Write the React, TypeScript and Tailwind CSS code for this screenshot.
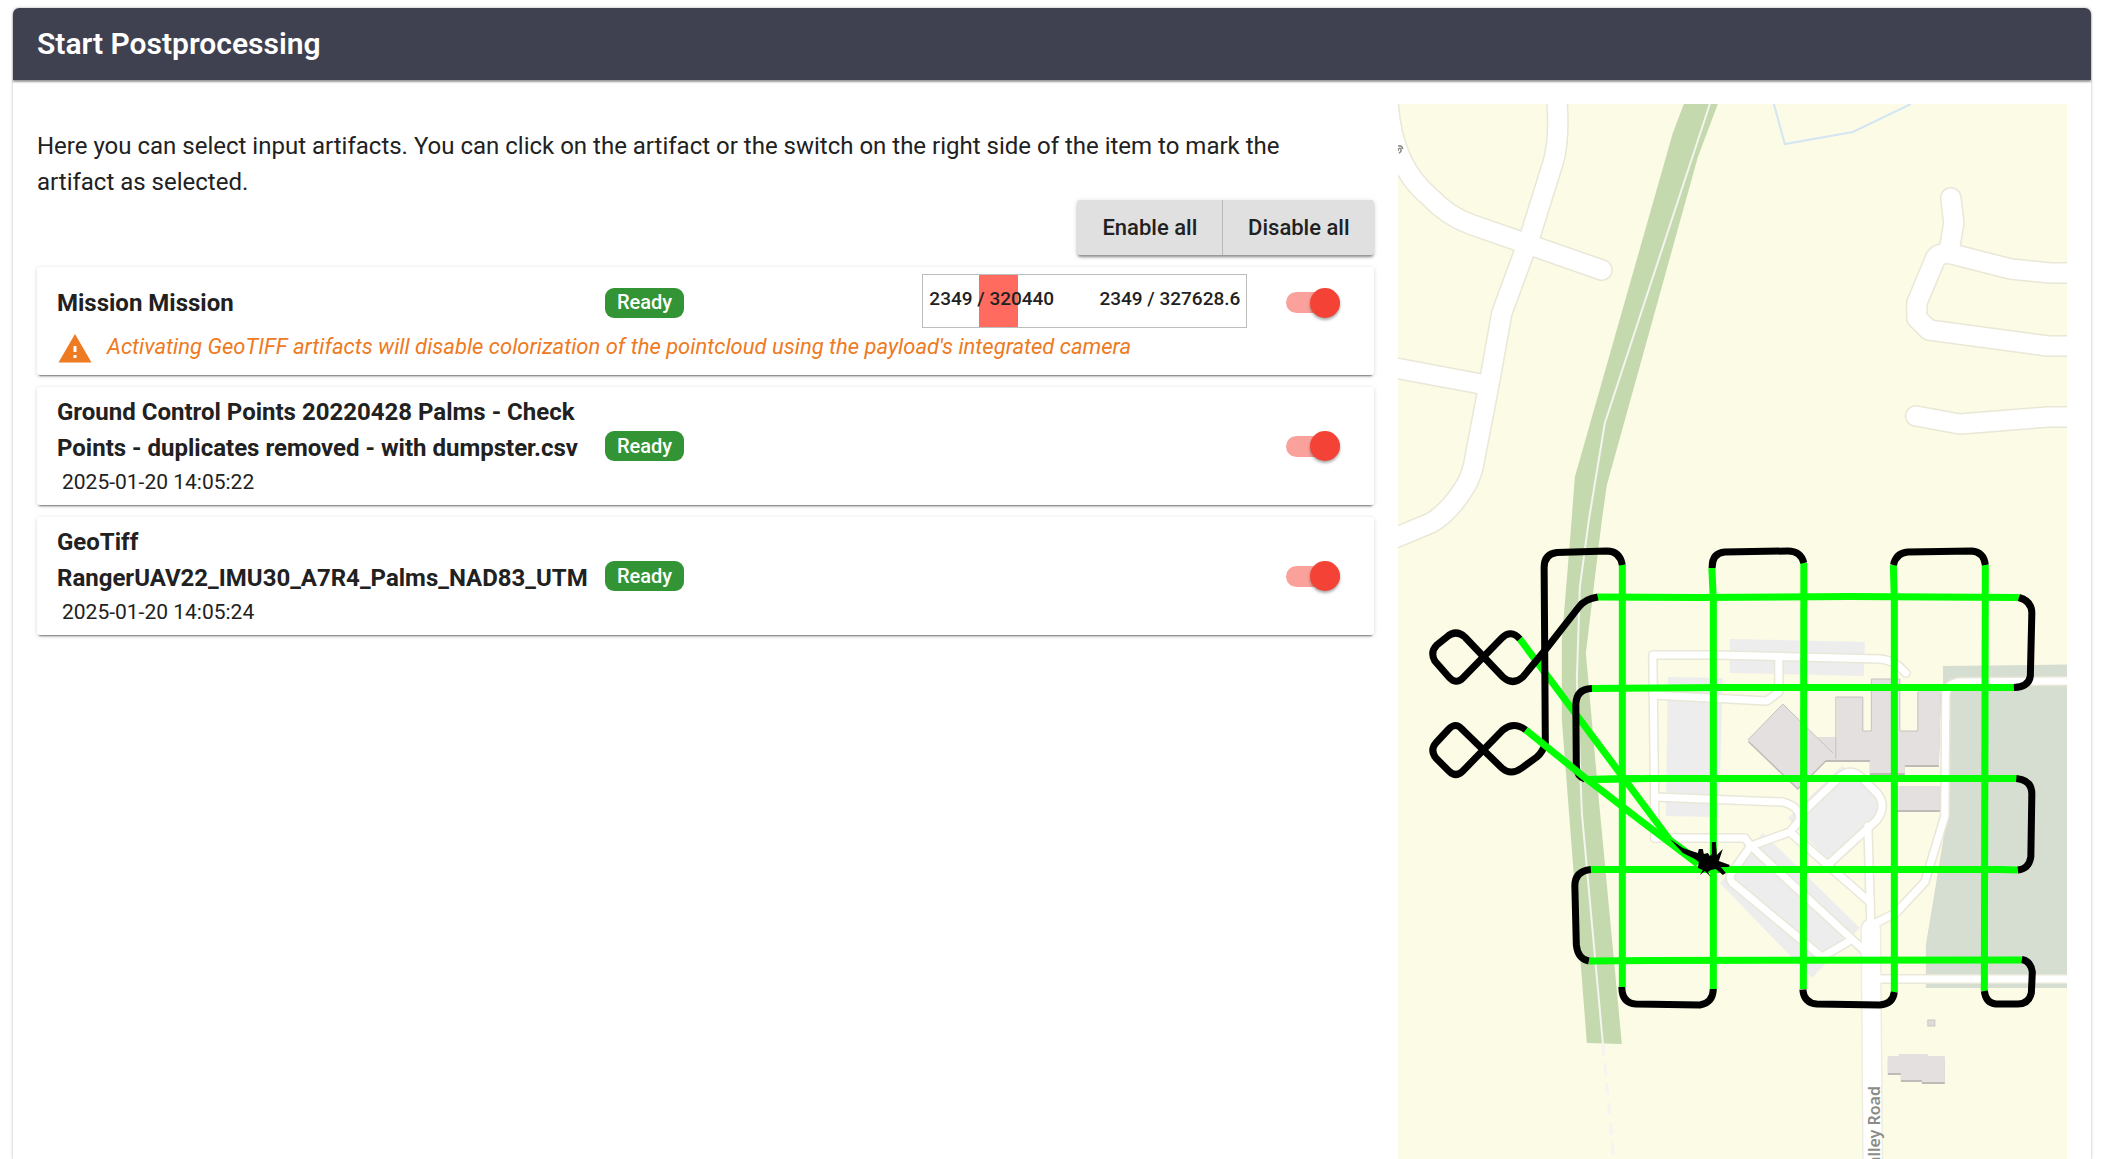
import React, { useState } from 'react';
import { MdWarning } from 'react-icons/md';

interface Artifact {
  id: string;
  name: string;
  date?: string;
  warning?: string;
  usage?: [string, string];
}

const artifacts: Artifact[] = [
  {
    id: 'mission',
    name: 'Mission Mission',
    usage: ['2349 / 320440', '2349 / 327628.6'],
    warning:
      "Activating GeoTIFF artifacts will disable colorization of the pointcloud using the payload's integrated camera",
  },
  {
    id: 'gcp',
    name: 'Ground Control Points 20220428 Palms - Check Points - duplicates removed - with dumpster.csv',
    date: '2025-01-20 14:05:22',
  },
  {
    id: 'geotiff',
    name: 'GeoTiff RangerUAV22_IMU30_A7R4_Palms_NAD83_UTM',
    date: '2025-01-20 14:05:24',
  },
];

const wideRoads = [
  'M1557 100 Q1560 135 1554 160 L1530 237 L1502 313 L1490 380 L1476 453 Q1473 475 1465 487 Q1450 512 1431 523 L1390 540',
  'M1388 98 Q1391 165 1430 197 Q1448 216 1470 224 L1516 240 L1602 270',
  'M1390 367 L1481 384',
  'M1951 198 L1954 223 L1949 252',
  'M2070 273 H2050 L2011 269 L1952 254 Q1938 252 1935 260 L1917 303 V318 L1929 330 L2048 346 H2070',
  'M1916 416 L1960 424 L2048 417 H2070',
];

const smallRoads = [
  'M1655 838 L1655 820 L1653 655 L1717 655 L1880 659 Q1895 660 1906 673',
  'M1655 838 L1745 838 L1751 846',
  'M1653 695 L1767 701 L1779 692 V657',
  'M1655 797 L1783 802 Q1801 807 1800 820 L1790 832 L1751 846',
  'M1800 815 L1840 777 Q1850 768 1861 777 L1878 794 Q1887 806 1877 820 L1830 863',
  'M1790 832 L1870 902',
  'M1868 826 L1871 925',
  'M1751 846 L1867 953',
  'M1751 846 L1731 874 Q1729 879 1733 883 L1822 957 L1848 942',
  'M2070 681 L1960 682 Q1948 683 1946 694 L1945 816 L1925 882 L1896 913 L1876 923',
  'M1880 979 H2070',
];

const surveyLines = [
  'M1622.5 565 V987',
  'M1712 568 L1713.5 600 V989',
  'M1804 563 L1803.5 989',
  'M1893.5 565 L1894.5 600 V992',
  'M1985.5 565 L1984.5 991',
  'M1598 597 L1700 597.5 L1850 596.5 L2019 597.5',
  'M1591 688.5 L1720 687.5 L2014 687.5',
  'M1587 779.5 L1650 778.5 H2017',
  'M1590 869.5 H2000 L2018 870',
  'M1589 961 L1650 960.5 L2022 960',
  'M1520 639 L1670 840 L1700 862',
];

const turns = [
  'M2019 597.5 Q2032 601 2032 613 L2030.5 676 Q2029 687 2014 687.5',
  'M2016.5 778.5 Q2032 780 2032 794 L2031 857 Q2029 869 2018 870',
  'M2022 959.5 Q2031 961 2032.5 972 L2031.5 993 Q2029 1004 2018 1004 H1996 Q1986 1003 1984.5 991',
  'M1803 989.5 Q1804 1003 1817 1004 L1880 1005 Q1893 1004 1894.5 992',
  'M1622 987 Q1622 1003 1636 1004 L1700 1005 Q1713 1003 1713.5 989',
  'M1592 688.5 Q1576 689 1576 705 L1576.5 767 Q1577 776 1585 779',
  'M1591 869.5 Q1575 871 1575 886 L1576.5 945 Q1578 959 1589 961',
  'M1712.3 568 Q1712 553 1725 552 L1788 551 Q1801 551 1804 563',
  'M1893.7 565 Q1896 553 1908 552 L1972 551 Q1984 552 1985.5 565',
  'M1622.5 565 Q1620 551 1607 551 L1557 552.5 Q1544 554 1544.3 568 L1545.5 743 Q1543 752 1537 757 L1522 768 Q1511 776 1502 768 L1462 729 Q1456 722 1449 729 L1436 743 Q1430 750 1436 758 L1449 771 Q1456 778 1463 771 L1503 730 Q1514 721 1526 730',
  'M1598 597 Q1585 599 1579 607 L1547 648 L1523 677 Q1513 686 1503 677 L1465 637 Q1456 629 1447 637 L1437 645 Q1430 652 1435 661 L1449 677 Q1456 685 1463 678 L1502 638 Q1511 629 1520 639',
];

function SurveyMap() {
  return (
    <svg
      className="block h-full w-full"
      viewBox="1398 104 669 1055"
      preserveAspectRatio="xMidYMin slice"
      role="img"
      aria-label="Mission flight path"
    >
      <rect x="1390" y="100" width="690" height="1200" fill="#fcfbe6" />

      {/* power line corridor */}
      <path
        d="M1684 104 L1673 133 L1575 477 L1571 530 L1562 640 V720 L1587 1043 L1622 1044 L1599 800 L1586 653 L1602 520 L1607 485 L1698 157 L1718 104 Z"
        fill="#c4d9ad"
      />
      <path
        d="M1710 104 L1605 423 L1589 520 L1580 587 L1577 680 L1582 813 L1603 1043"
        fill="none"
        stroke="#f4f5ef"
        strokeWidth="2"
      />
      <path d="M1603 1043 L1614 1159" fill="none" stroke="#f5f4f1" strokeWidth="3" strokeDasharray="12 8" />
      <path d="M1774 104 L1785 144 L1853 132 L1911 104" fill="none" stroke="#d3e6f3" strokeWidth="2" />

      {/* school grounds and parking */}
      <path d="M1943 666 L2070 664.5 V988 H1926 V945 L1945 830 Z" fill="#d6ded1" />
      <g fill="#ededed">
        <path d="M1730 639 L1865 642 L1864 676 L1730 673 Z" />
        <path d="M1668 677 L1723 678 L1719 817 L1666 816 Z" />
        <path d="M1720 883 L1763 833 L1860 928 L1812 978 Z" />
        <path d="M1842 766 L1862 778 L1880 797 L1882 808 L1876 820 L1830 862 L1788 818 Z" />
      </g>

      <g fill="none" strokeLinecap="round" strokeLinejoin="round">
        {wideRoads.map((d) => (
          <path key={d} d={d} stroke="#e9e7d6" strokeWidth="22" />
        ))}
        {smallRoads.map((d) => (
          <path key={d} d={d} stroke="#e9e7d8" strokeWidth="10" />
        ))}
        <path d="M1871 928 L1873 1180" stroke="#efeddf" strokeWidth="21" />
        {wideRoads.map((d) => (
          <path key={d} d={d} stroke="#ffffff" strokeWidth="19" />
        ))}
        {smallRoads.map((d) => (
          <path key={d} d={d} stroke="#ffffff" strokeWidth="7" />
        ))}
        <path d="M1871 929 L1873 1180" stroke="#ffffff" strokeWidth="18" />
      </g>

      {/* buildings, shadow first */}
      {['#bfbab8', '#e4e0df'].map((fill, i) => (
        <g key={fill} fill={fill} transform={i === 0 ? 'translate(0 2)' : undefined}>
          <path d="M1783 704 L1748 740 L1798 788 L1833 753 Z" />
          <path d="M1837 697 H1863 V731 H1872 V679 H1900 V731 H1918 V691 H1941 L1939 765 H1905 V773 H1870 V760 H1826 L1818 737 H1837 Z" />
          <path d="M1897 786 H1940 V810 H1897 Z" />
          <path d="M1888 1056 H1899 V1054 H1928 V1056 H1945 V1082 H1922 V1080 H1901 V1073 H1888 Z" />
        </g>
      ))}
      <path
        d="M1748 740 L1783 704 L1833 753 M1836 759 V697 H1863 V731 H1871.5 V679 H1900 V731 H1918 V692"
        fill="none"
        stroke="#c6c1bf"
        strokeWidth="1"
      />
      <rect x="1928" y="1020" width="7" height="6" fill="#dedbd8" stroke="#c9c6c3" />

      <g className="font-['Noto_Sans',sans-serif]" fill="#8b8b87" fontSize="16" fontWeight="600">
        <text transform="translate(1880 1086) rotate(-90)" textAnchor="end">
          alley Road
        </text>
      </g>
      <path
        d="M1398 146 Q1402 145 1403 149 M1398 151 Q1399 147 1401 149 Q1402 152 1399 153"
        fill="none"
        stroke="#8b8b87"
        strokeWidth="1.5"
      />

      <g fill="none" strokeWidth="7" strokeLinejoin="round">
        {surveyLines.map((d) => (
          <path key={d} d={d} stroke="#00ff00" />
        ))}
        {turns.map((d) => (
          <path key={d} d={d} stroke="#000000" />
        ))}
        <path d="M1526 730 L1583 776 L1640 820 L1698 864" stroke="#00ff00" />
        <path d="M1587 779.5 L1640 778.5" stroke="#00ff00" />
      </g>
      <path
        d="M1670 839 L1683 848 L1698 853 L1699 849 H1703 L1704 854 L1708 853 L1710 856 L1712 854 V842 H1716 L1717 855 L1723 849 L1719 861 L1730 865 L1729 867 L1721 867 L1726 873 L1723 875 L1716 869 L1711 870 L1708 872 L1711 877 L1705 871 L1700 875 L1703 870 L1698 868 L1699 862 L1695 859 L1683 853 Z"
        fill="#000000"
      />
    </svg>
  );
}

interface SwitchProps {
  label: string;
  checked: boolean;
  onChange: () => void;
}

function Switch({ label, checked, onChange }: SwitchProps) {
  return (
    <label className="relative flex h-[30px] w-[54px] shrink-0 cursor-pointer items-center">
      <input
        type="checkbox"
        role="switch"
        aria-label={label}
        className="peer absolute inset-0 cursor-pointer opacity-0"
        checked={checked}
        onChange={onChange}
      />
      <span className="h-[21px] w-full rounded-full bg-black/30 peer-checked:bg-[#faa19b]" />
      <span className="absolute left-0 h-[30px] w-[30px] rounded-full bg-gray-50 shadow-[0_2px_3px_rgba(0,0,0,0.35)] peer-checked:right-0 peer-checked:left-auto peer-checked:bg-[#f44336]" />
    </label>
  );
}

interface CardProps {
  artifact: Artifact;
  selected: boolean;
  toggle: () => void;
}

function ArtifactCard({ artifact, selected, toggle }: CardProps) {
  const { name, date, warning, usage } = artifact;

  return (
    <li className="rounded-[3px] bg-white px-5 py-[7px] shadow-[0_3px_2px_-2px_rgba(0,0,0,0.5),0_1px_4px_rgba(0,0,0,0.16)]">
      <div className={usage ? 'flex h-[57px] items-center' : 'flex items-center'}>
        <div className="w-[548px] shrink-0">
          <h2 className="text-2xl/9 font-bold">{name}</h2>
          {date && <time className="block pl-[5px] text-[21px]/8">{date}</time>}
        </div>
        <span className="flex h-[30px] items-center rounded-[9px] bg-[#339436] px-3 pb-px text-xl font-medium text-white">
          Ready
        </span>
        <div className="flex-1" />
        {usage && (
          <div className="relative mr-[39px] flex h-[54px] w-[325px] justify-between self-start border border-[#bdbdbd] px-1.5 pt-2.5 text-[19px]/7 font-medium">
            <div className="absolute inset-y-0 left-14 w-[39px] bg-[#ff6b5f]" />
            <span className="relative">{usage[0]}</span>
            <span className="relative">{usage[1]}</span>
          </div>
        )}
        <div className="mr-3.5 flex">
          <Switch label={name} checked={selected} onChange={toggle} />
        </div>
      </div>
      {warning && (
        <div className="flex h-[37px] items-start gap-3.5 text-[#ee7a22]">
          <MdWarning className="h-9 w-9 shrink-0" />
          <em className="text-[22px]/8">{warning}</em>
        </div>
      )}
    </li>
  );
}

export default function App() {
  const [selected, setSelected] = useState<string[]>(artifacts.map((a) => a.id));

  function toggle(id: string) {
    setSelected((prev) => (prev.includes(id) ? prev.filter((s) => s !== id) : [...prev, id]));
  }

  return (
    <div className="flex min-h-screen flex-col bg-white pt-2 pr-2.5 pl-[13px] font-[Roboto,sans-serif] text-[#212121]">
      <main className="flex flex-1 flex-col rounded-t-md shadow-[0_0_3px_rgba(0,0,0,0.3)]">
        <header className="flex h-[72px] items-center rounded-t-md bg-[#3f4151] px-6 shadow-[0_2px_2px_rgba(0,0,0,0.4)]">
          <h1 className="text-3xl font-semibold text-white">Start Postprocessing</h1>
        </header>
        <div className="grid flex-1 grid-cols-[2fr_1fr] gap-6 px-6 pt-6">
          <section>
            <p className="pt-6 pr-12 text-2xl/9">
              Here you can select input artifacts. You can click on the artifact or the switch on the right side of the
              item to mark the artifact as selected.
            </p>
            <div className="flex justify-end">
              <div className="flex h-[55px] rounded-[3px] bg-[#e0e0e0] text-[22px] font-medium shadow-[0_3px_3px_-1px_rgba(0,0,0,0.4),0_1px_5px_rgba(0,0,0,0.15)]">
                <button
                  className="w-[146px] cursor-pointer border-r border-[#b8b8b8]"
                  onClick={() => setSelected(artifacts.map((a) => a.id))}
                >
                  Enable all
                </button>
                <button className="w-[151px] cursor-pointer" onClick={() => setSelected([])}>
                  Disable all
                </button>
              </div>
            </div>
            <ul className="mt-3 flex flex-col gap-3">
              {artifacts.map((a) => (
                <React.Fragment key={a.id}>
                  <ArtifactCard artifact={a} selected={selected.includes(a.id)} toggle={() => toggle(a.id)} />
                </React.Fragment>
              ))}
            </ul>
          </section>
          <SurveyMap />
        </div>
      </main>
    </div>
  );
}
